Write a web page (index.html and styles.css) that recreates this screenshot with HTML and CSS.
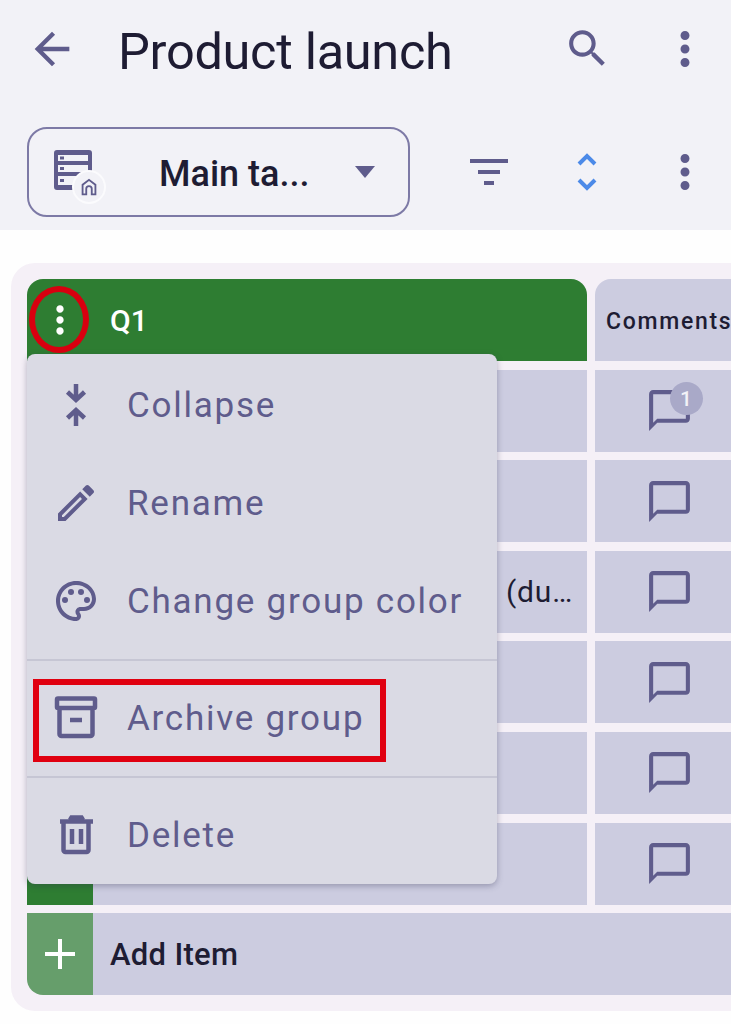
FILE: index.html
```html
<!DOCTYPE html>
<html lang="en">
<head>
<meta charset="utf-8">
<title>Product launch</title>
<link rel="stylesheet" href="styles.css">
</head>
<body>
<svg class="defs" width="0" height="0" aria-hidden="true">
  <symbol id="more" viewBox="0 0 24 24"><path d="M12 8c1.1 0 2-.9 2-2s-.9-2-2-2-2 .9-2 2 .9 2 2 2zm0 2c-1.1 0-2 .9-2 2s.9 2 2 2 2-.9 2-2-.9-2-2-2zm0 6c-1.1 0-2 .9-2 2s.9 2 2 2 2-.9 2-2-.9-2-2-2z"/></symbol>
  <symbol id="comment" viewBox="0 0 24 24"><path d="M20 2H4c-1.1 0-2 .9-2 2v18l4-4h14c1.1 0 2-.9 2-2V4c0-1.1-.9-2-2-2zm0 14H6l-2 2V4h16v12z"/></symbol>
</svg>

<header class="appbar">
  <div class="topbar">
    <svg class="icon back" viewBox="0 0 24 24"><path d="M20 11H7.83l5.59-5.59L12 4l-8 8 8 8 1.41-1.41L7.83 13H20v-2z"/></svg>
    <h1 class="title">Product launch</h1>
    <svg class="icon search" viewBox="0 0 24 24"><path d="M15.5 14h-.79l-.28-.27C15.41 12.59 16 11.11 16 9.5 16 5.91 13.09 3 9.5 3S3 5.91 3 9.5 5.91 16 9.5 16c1.61 0 3.09-.59 4.23-1.57l.27.28v.79l5 4.99L20.49 19l-4.99-5zm-6 0C7.01 14 5 11.99 5 9.5S7.01 5 9.5 5 14 7.01 14 9.5 11.99 14 9.5 14z"/></svg>
    <svg class="icon more"><use href="#more"/></svg>
  </div>
  <div class="viewbar">
    <div class="selector">
      <span class="board-icon">
        <svg class="board-svg" viewBox="0 0 38 40">
          <path fill-rule="evenodd" d="M3 0h32a3 3 0 0 1 3 3v34a3 3 0 0 1-3 3H3a3 3 0 0 1-3-3V3a3 3 0 0 1 3-3zM4 5v6h30V5zM4 15v7h30v-7zM4 26v9h30v-9z"/>
          <path d="M6 6.500h4v3H6zM6 17h4v3H6zM6 29h4v3H6z"/>
        </svg>
        <span class="home-badge">
          <svg class="home-svg" viewBox="0 0 24 24"><path d="M12 3 4 9v12h6v-7a2 2 0 0 1 4 0v7h6V9zm6 16h-2v-5a4 4 0 0 0-8 0v5H6v-9l6-4.500 6 4.500z"/></svg>
        </span>
      </span>
      <span class="selector-label">Main ta...</span>
      <svg class="caret" viewBox="0 0 20 12"><path d="M0 0h20L10 12z"/></svg>
    </div>
    <svg class="icon filter" viewBox="0 0 38 26"><path d="M0 0h38v4H0zM8 11h22v4H8zM14 22h10v4H14z"/></svg>
    <svg class="icon unfold" viewBox="0 0 24 38"><path d="M4 11 12 3l8 8M4 27l8 8 8-8"/></svg>
    <svg class="icon more"><use href="#more"/></svg>
  </div>
</header>

<main class="board">
  <div class="table">
    <div class="row row-head">
      <div class="group-head">
        <svg class="group-more"><use href="#more"/></svg>
        <span class="group-name">Q1</span>
      </div>
      <div class="cell cell-head">Comments</div>
    </div>

    <div class="row">
      <div class="marker"></div><div class="name"></div>
      <div class="cell">
        <span class="comment-wrap">
          <svg class="comment"><use href="#comment"/></svg>
          <span class="count">1</span>
        </span>
      </div>
    </div>
    <div class="row">
      <div class="marker"></div><div class="name"></div>
      <div class="cell"><svg class="comment"><use href="#comment"/></svg></div>
    </div>
    <div class="row">
      <div class="marker"></div><div class="name"><span class="name-text">(duplicate)</span></div>
      <div class="cell"><svg class="comment"><use href="#comment"/></svg></div>
    </div>
    <div class="row">
      <div class="marker"></div><div class="name"></div>
      <div class="cell"><svg class="comment"><use href="#comment"/></svg></div>
    </div>
    <div class="row">
      <div class="marker"></div><div class="name"></div>
      <div class="cell"><svg class="comment"><use href="#comment"/></svg></div>
    </div>
    <div class="row">
      <div class="marker"></div><div class="name"></div>
      <div class="cell"><svg class="comment"><use href="#comment"/></svg></div>
    </div>

    <div class="row row-add">
      <div class="marker marker-add">
        <svg class="plus" viewBox="0 0 30 30"><path d="M13 0h4v13h13v4H17v13h-4V17H0v-4h13z"/></svg>
      </div>
      <div class="add-label">Add Item</div>
    </div>
  </div>
</main>

<nav class="menu">
  <div class="menu-item">
    <span class="menu-icon"><svg class="mi" viewBox="0 0 48 48"><path class="st" d="M24 3v15M15.500 11 24 19l8.500-8M24 45V30M15.500 37 24 29l8.500 8"/></svg></span>
    <span>Collapse</span>
  </div>
  <div class="menu-item">
    <span class="menu-icon"><svg class="mi" viewBox="0 0 24 24"><path d="M3 17.250V21h3.750L17.810 9.940l-3.750-3.750L3 17.250zM5.920 19H5v-.92l9.060-9.060.92.920L5.920 19zM20.710 7.040c.39-.39.39-1.020 0-1.410l-2.340-2.340c-.2-.2-.45-.29-.71-.29s-.51.09-.7.28l-1.830 1.830 3.750 3.750 1.830-1.820z"/></svg></span>
    <span>Rename</span>
  </div>
  <div class="menu-item">
    <span class="menu-icon"><svg class="mi" viewBox="0 0 24 24"><path d="M12 22C6.490 22 2 17.510 2 12S6.490 2 12 2s10 4.040 10 9c0 3.310-2.690 6-6 6h-1.770c-.28 0-.5.22-.5.5 0 .12.05.23.13.33.41.47.64 1.060.64 1.670 0 1.380-1.120 2.500-2.500 2.500zm0-18c-4.410 0-8 3.590-8 8s3.590 8 8 8c.28 0 .5-.22.5-.5 0-.16-.08-.28-.14-.35-.41-.46-.63-1.050-.63-1.650 0-1.380 1.120-2.500 2.500-2.500H16c2.210 0 4-1.790 4-4 0-3.860-3.590-7-8-7z"/><circle cx="6.500" cy="11.500" r="1.500"/><circle cx="9.500" cy="7.500" r="1.500"/><circle cx="14.500" cy="7.500" r="1.500"/><circle cx="17.500" cy="11.500" r="1.500"/></svg></span>
    <span>Change group color</span>
  </div>
  <hr class="menu-rule">
  <div class="menu-item">
    <span class="menu-icon"><svg class="mi" viewBox="0 0 48 48"><path class="st" d="M6 4.500h36a1 1 0 0 1 1 1V13a1 1 0 0 1-1 1H6a1 1 0 0 1-1-1V5.500a1 1 0 0 1 1-1zM7.500 14v26a2 2 0 0 0 2 2h29a2 2 0 0 0 2-2V14M18 26h12"/></svg></span>
    <span>Archive group</span>
  </div>
  <hr class="menu-rule">
  <div class="menu-item">
    <span class="menu-icon"><svg class="mi" viewBox="0 0 48 48"><path class="st" d="M11.500 11v28a2 2 0 0 0 2 2h21a2 2 0 0 0 2-2V11M8 10.500h33M18 9l1.500-2.500h10L31 9M20 18v15M29 18v15"/></svg></span>
    <span>Delete</span>
  </div>
</nav>

<div class="mark-circle"></div>
<div class="mark-rect"></div>
</body>
</html>
```
FILE: styles.css
```css
* { box-sizing: border-box; }
html, body { margin: 0; padding: 0; }
body {
  position: relative;
  width: 731px;
  height: 1024px;
  overflow: hidden;
  background: #fefefe;
  font-family: Roboto, "Liberation Sans", sans-serif;
  color: #1e1c33;
}
.defs { position: absolute; }
svg { display: block; fill: #5f5c8c; }

.appbar { height: 230px; background: #f2f2f7; padding: 0 27px; }
.topbar { height: 97px; display: flex; align-items: center; }
.icon { flex: none; }
.back { width: 52px; height: 52px; margin-left: -1px; }
.title {
  flex: 1;
  margin: 6px 0 0 40px;
  font-size: 50.500px;
  font-weight: 400;
  letter-spacing: -0.3px;
  white-space: nowrap;
}
.search { width: 49px; height: 49px; }
.more { width: 54px; height: 54px; }
.topbar .more { margin-left: 46px; margin-right: -8px; }

.viewbar { margin-top: 30px; display: flex; align-items: center; }
.selector {
  width: 383px;
  height: 90px;
  border: 2px solid #7d7aa6;
  border-radius: 20px;
  display: flex;
  align-items: center;
  padding-left: 25px;
  flex: none;
}
.board-icon { position: relative; width: 38px; height: 40px; margin-top: -4px; flex: none; }
.board-svg { width: 38px; height: 40px; }
.home-badge {
  position: absolute;
  left: 18px;
  top: 20px;
  width: 34px;
  height: 34px;
  border-radius: 50%;
  background: #f2f2f7;
  border: 2px solid #fbfbfd;
  display: flex;
  align-items: center;
  justify-content: center;
}
.home-svg { width: 22px; height: 22px; }
.selector-label {
  margin: 3px 0 0 67px;
  font-size: 36px;
  font-weight: 500;
  white-space: nowrap;
}
.caret { width: 20px; height: 12px; margin-left: 46px; }
.filter { width: 38px; height: 26px; margin-left: 60px; }
.unfold { width: 24px; height: 38px; margin-left: 67px; fill: none; }
.unfold path { fill: none; stroke: #4c8ae8; stroke-width: 4; }
.viewbar .more { margin-left: 59px; margin-right: -8px; }

.board {
  margin: 33px 0 0 11px;
  width: 900px;
  height: 748px;
  padding: 16px;
  background: #f5f0f7;
  border-radius: 24px 0 0 24px;
}
.table { display: flex; flex-direction: column; gap: 8.600px; }
.row { display: flex; height: 82px; }
.group-head {
  width: 560px;
  background: #2e7d32;
  border-radius: 16px 16px 0 0;
  display: flex;
  align-items: center;
  flex: none;
}
.group-more { width: 44px; height: 44px; margin-left: 11px; fill: #fff; }
.group-name { margin-left: 28px; color: #fff; font-size: 30px; font-weight: 500; }
.cell {
  width: 148px;
  margin-left: 8px;
  background: #cccce0;
  display: flex;
  align-items: center;
  justify-content: center;
  flex: none;
}
.cell-head {
  justify-content: flex-start;
  padding: 2px 0 0 11px;
  border-radius: 16px 0 0 0;
  font-size: 23px;
  font-weight: 500;
  letter-spacing: 1.700px;
  white-space: nowrap;
  overflow: hidden;
}
.marker { width: 66px; background: #2e7d32; flex: none; }
.name {
  width: 494px;
  background: #cccce0;
  flex: none;
  display: flex;
  align-items: center;
  padding: 0 12px 0 413px;
}
.name-text {
  font-size: 30px;
  letter-spacing: 0.8px;
  color: #1e1c33;
  white-space: nowrap;
  overflow: hidden;
  text-overflow: ellipsis;
}
.comment { width: 49px; height: 49px; fill: #5f5c8c; }
.comment-wrap { position: relative; display: block; }
.count {
  position: absolute;
  left: 25px;
  top: -4px;
  width: 33px;
  height: 33px;
  border-radius: 50%;
  background: #a9a9c8;
  color: #f2f2f7;
  font-size: 21px;
  font-weight: 500;
  display: flex;
  align-items: center;
  justify-content: center;
}
.row-add { width: 800px; }
.marker-add {
  background: #669e6b;
  border-radius: 0 0 0 16px;
  display: flex;
  align-items: center;
  justify-content: center;
}
.plus { width: 30px; height: 30px; fill: #fff; }
.add-label {
  flex: 1;
  background: #cccce0;
  display: flex;
  align-items: center;
  padding-left: 17px;
  font-size: 31px;
  font-weight: 500;
  letter-spacing: 0.3px;
}

.menu {
  position: absolute;
  left: 27px;
  top: 354px;
  width: 470px;
  height: 530px;
  padding-top: 2px;
  background: #dadae4;
  border-radius: 8px;
  box-shadow: 0 2px 6px rgba(50, 50, 80, 0.35);
  color: #5f5c8c;
  font-size: 35px;
  letter-spacing: 1.750px;
}
.menu-item { height: 98px; display: flex; align-items: center; padding-left: 25px; white-space: nowrap; }
.menu-icon { width: 48px; height: 48px; margin-right: 27px; flex: none; }
.mi { width: 48px; height: 48px; }
.st { fill: none; stroke: #5f5c8c; stroke-width: 4.500; }
.menu-rule { height: 2px; margin: 8.500px 0; border: 0; background: #c6c6d4; }

.mark-circle {
  position: absolute;
  left: 29px;
  top: 286px;
  width: 60px;
  height: 67px;
  border: 6px solid #d8000f;
  border-radius: 50%;
}
.mark-rect {
  position: absolute;
  left: 33px;
  top: 679px;
  width: 353px;
  height: 83px;
  border: 6px solid #e00010;
}
```
